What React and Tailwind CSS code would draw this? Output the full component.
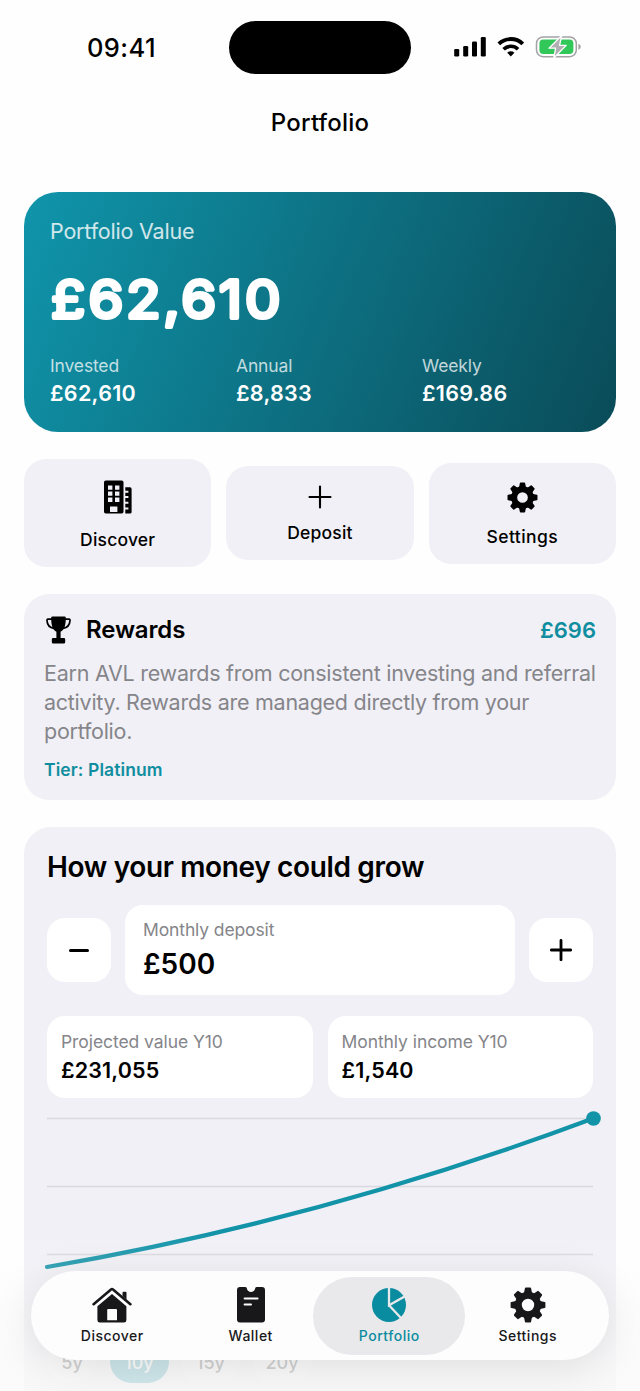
import { clsx } from "clsx";

const GearIcon = ({ className }) => (
  <svg viewBox="-18 -18 36 36" className={className}>
    <circle r="9.7" fill="none" stroke="currentColor" strokeWidth="7" />
    {[0, 45, 90, 135, 180, 225, 270, 315].map((angle) => (
      <path
        key={angle}
        d="M-3.1 -12 L-2.2 -16.5 H2.2 L3.1 -12 Z"
        fill="currentColor"
        stroke="currentColor"
        strokeWidth="1.8"
        strokeLinejoin="round"
        transform={`rotate(${angle})`}
      />
    ))}
  </svg>
);

const BuildingIcon = ({ className }) => (
  <svg viewBox="0 0 28 34" className={className} fill="currentColor">
    <path
      fillRule="evenodd"
      d="M1.8 .5H17.7Q19.5 .5 19.5 2.3V31.7Q19.5 33.5 17.7 33.5H1.8Q0 33.5 0 31.7V2.3Q0 .5 1.8 .5ZM4 5.6V9.8H8.4V5.6ZM11 5.6V9.8H15.4V5.6ZM4 11.5V15.7H8.4V11.5ZM11 11.5V15.7H15.4V11.5ZM4 17.4V22H8.4V17.4ZM11 17.4V22H15.4V17.4ZM6 26.4V32H13.4V26.4Z"
    />
    <path d="M21.3 7.3H26Q27.6 7.3 27.6 8.9V31.9Q27.6 33.5 26 33.5H21.3V29.6H24.4V27.6H21.3V23.8H24.4V21.8H21.3V18.1H24.4V16.1H21.3V12.8H24.4V10.8H21.3Z" />
  </svg>
);

const PlusIcon = ({ className, width = 2.4 }) => (
  <svg
    viewBox="0 0 24 24"
    className={className}
    stroke="currentColor"
    strokeWidth={width}
    strokeLinecap="round"
  >
    <path d="M12 1.5V22.5M1.5 12H22.5" />
  </svg>
);

const TrophyIcon = ({ className }) => (
  <svg viewBox="0 0 26 28" className={className} fill="currentColor">
    <path d="M6.5 .5H18.5Q19.8 .5 19.8 1.8C19.8 8 19 13.5 14.6 15.8V22H17.8Q19.2 22 19.2 23.4V26Q19.2 27.5 17.8 27.5H7.2Q5.8 27.5 5.8 26V23.4Q5.8 22 7.2 22H10.4V15.8C6 13.5 5.2 8 5.2 1.8Q5.2 .5 6.5 .5Z" />
    <path
      d="M6 3.1H1.9Q.9 3.1 1 4.6C1.2 8.2 3.5 11.6 8 12.4M19 3.1H23.1Q24.1 3.1 24 4.6C23.8 8.2 21.5 11.6 17 12.4"
      fill="none"
      stroke="currentColor"
      strokeWidth="1.7"
    />
  </svg>
);

const HouseIcon = ({ className }) => (
  <svg viewBox="0 0 40 36" className={className}>
    <path
      d="M1.6 17.2 19 2.4Q20 1.6 21 2.4L38.4 17.2"
      fill="none"
      stroke="currentColor"
      strokeWidth="2.6"
      strokeLinecap="round"
      strokeLinejoin="round"
    />
    <path
      fill="currentColor"
      d="M30.5 9V5.8Q30.5 4.8 31.5 4.8H33.5Q34.5 4.8 34.5 5.8V12.7Z"
    />
    <path
      fill="currentColor"
      fillRule="evenodd"
      d="M20 7 34.4 19.3V33Q34.4 35.5 32 35.5H7.8Q5.4 35.5 5.4 33V19.3ZM16.2 22Q15.2 22 15.2 23V33.2H25V23Q25 22 24 22Z"
    />
  </svg>
);

const WalletIcon = ({ className }) => (
  <svg viewBox="0 0 28 36" className={className}>
    <path
      fill="currentColor"
      d="M3 0H8.2Q9.5 0 9.8 1.3C10.6 6.3 17.4 6.3 18.2 1.3Q18.5 0 19.8 0H25Q28 0 28 3V32.5Q28 35.5 25 35.5H3Q0 35.5 0 32.5V3Q0 0 3 0Z"
    />
    <path
      d="M7.6 11.4H20.6M7.6 17.4H14"
      stroke="white"
      strokeWidth="2"
      strokeLinecap="round"
    />
  </svg>
);

const PieIcon = ({ className }) => (
  <svg viewBox="-17 -17 34 34" className={className}>
    <circle r="17" fill="currentColor" />
    <path
      d="M0 -18V.3L16 -8.7M0 .3 12.7 13.8"
      fill="none"
      stroke="#e9e9eb"
      strokeWidth="2.3"
    />
  </svg>
);

const StatusIcons = () => (
  <svg viewBox="0 0 128 24" className="h-6 w-32">
    <rect x="0.2" y="14" width="5" height="7.6" rx="1.3" />
    <rect x="9.2" y="11" width="5" height="10.6" rx="1.3" />
    <rect x="18" y="6.4" width="5" height="15.2" rx="1.3" />
    <rect x="26.8" y="2" width="5" height="19.6" rx="1.3" />
    <g transform="translate(56.8 21.4)" fill="none" stroke="#000">
      <path d="M-12 -12.5A17.3 17.3 0 0 1 12 -12.5" strokeWidth="3.9" />
      <path d="M-7.2 -7.2A10.3 10.3 0 0 1 7.2 -7.2" strokeWidth="3.7" />
      <path
        d="M0 0 -3.6 -3.7A5.2 5.2 0 0 1 3.6 -3.7Z"
        fill="#000"
        stroke="none"
      />
    </g>
    <rect
      x="82.5"
      y="1.9"
      width="39.8"
      height="19.8"
      rx="6.6"
      fill="none"
      stroke="#a3a3a5"
      strokeWidth="1.5"
    />
    <path d="M124.4 8.7Q126.8 9.8 126.8 11.8T124.4 15Z" fill="#a3a3a5" />
    <rect x="85.4" y="4.6" width="34" height="14.4" rx="4" fill="#31c759" />
    <path
      d="M107.6 0.6 95 13.2H101.6L99.8 23 112.2 10.4H105.6Z"
      fill="#b0b0b2"
      stroke="white"
      strokeWidth="1.3"
      strokeLinejoin="round"
    />
  </svg>
);

const stats = [
  { label: "Invested", value: "£62,610" },
  { label: "Annual", value: "£8,833" },
  { label: "Weekly", value: "£169.86" },
];

const projections = [
  { label: "Projected value Y10", value: "£231,055" },
  { label: "Monthly income Y10", value: "£1,540" },
];

const ranges = ["5y", "10y", "15y", "20y"];

const tabs = [
  { label: "Discover", icon: <HouseIcon className="h-9 w-10" /> },
  { label: "Wallet", icon: <WalletIcon className="h-9 w-7" /> },
  {
    label: "Portfolio",
    icon: <PieIcon className="h-[34px] w-[34px]" />,
    active: true,
  },
  { label: "Settings", icon: <GearIcon className="h-9 w-9" /> },
];

const Header = () => (
  <header className="h-[192px]">
    <div className="flex h-[94px] items-center">
      <div className="w-[229px] pl-[87px] pt-px text-[25.5px] font-medium leading-[30px] tracking-[0.4px]">
        09:41
      </div>
      <div className="h-[53px] w-[182px] rounded-full bg-black" />
      <div className="ml-[43px]">
        <StatusIcons />
      </div>
    </div>
    <h1 className="text-center text-[24px] font-medium leading-[58px] tracking-[0.2px]">
      Portfolio
    </h1>
  </header>
);

const ValueCard = () => (
  <section className="h-[240px] rounded-[34px] bg-[linear-gradient(112deg,#1095ab_0%,#0a4b58_100%)] px-[26px] pt-[25px] text-white">
    <p className="text-[21.5px] leading-7 tracking-[-0.2px] text-white/80">
      Portfolio Value
    </p>
    {/* round joins soften the corners of the numerals */}
    <svg
      viewBox="0 0 260 70"
      className="mt-[19px] block h-[70px] w-[260px] overflow-visible text-[52px] font-normal tracking-[2.8px]"
    >
      <text
        x="1"
        y="54"
        fill="white"
        stroke="white"
        strokeWidth="4.1"
        strokeLinejoin="round"
        transform="scale(1.08 1)"
      >
        £62,610
      </text>
    </svg>
    <div className="mt-[21px] grid grid-cols-3 gap-[18px]">
      {stats.map((stat) => (
        <div key={stat.label}>
          <p className="text-[17.5px] leading-[22px] tracking-[-0.15px] text-white/75">
            {stat.label}
          </p>
          <p className="mt-0.5 text-[21.5px] font-semibold leading-7 tracking-[0.3px]">
            {stat.value}
          </p>
        </div>
      ))}
    </div>
  </section>
);

const QuickActions = () => (
  <div className="mt-[27px] grid grid-cols-3 items-center gap-[15px] text-[17.5px] font-medium leading-[22px] tracking-[0.2px]">
    <button className="flex h-[108px] flex-col items-center rounded-[22px] bg-[#f1f0f6] pt-[21px]">
      <BuildingIcon className="h-[34px] w-7" />
      <span className="mt-[15px]">Discover</span>
    </button>
    <button className="flex h-[94px] flex-col items-center rounded-[22px] bg-[#f1f0f6] pt-[19px]">
      <PlusIcon className="h-6 w-6" width={2.1} />
      <span className="mt-[13px]">Deposit</span>
    </button>
    <button className="flex h-[101px] flex-col items-center rounded-[22px] bg-[#f1f0f6] pt-[19px]">
      <GearIcon className="h-[31px] w-[31px]" />
      <span className="mt-[13px] tracking-[0.4px]">Settings</span>
    </button>
  </div>
);

const RewardsCard = () => (
  <section className="mt-[27px] h-[206px] rounded-[25px] bg-[#f1f0f6] px-5 pt-[21px]">
    <div className="flex h-[30px] items-center">
      <TrophyIcon className="ml-[2px] h-7 w-[26px]" />
      <h2 className="ml-3.5 text-[24px] font-semibold leading-[30px] tracking-[-0.15px]">
        Rewards
      </h2>
      <span className="ml-auto text-[22px] font-semibold leading-[30px] text-[#108ea0]">
        £696
      </span>
    </div>
    <p className="mt-3.5 whitespace-nowrap text-[21.5px] leading-[29px] tracking-[-0.26px] text-[#85858a]">
      Earn AVL rewards from consistent investing and referral
      <br />
      activity. Rewards are managed directly from your
      <br />
      portfolio.
    </p>
    <p className="mt-[13px] text-[17.5px] font-semibold leading-[22px] tracking-[0.1px] text-[#108ea0]">
      Tier: Platinum
    </p>
  </section>
);

const GrowthChart = () => (
  <svg viewBox="0 0 546 242" className="h-[242px] w-full overflow-visible">
    <path d="M0 20.5H546M0 88.5H546M0 156.5H546" stroke="#d9d8de" strokeWidth="1.4" />
    <path
      d="M0 169Q273 122.4 546 20.5"
      fill="none"
      stroke="#1293a8"
      strokeWidth="4.2"
      strokeLinecap="round"
    />
    <circle cx="546.5" cy="20.5" r="7.3" fill="#1293a8" />
  </svg>
);

const GrowthCard = () => (
  <section className="mt-[27px] h-[620px] rounded-t-[27px] bg-[#f1f0f6] px-[23px] pt-[23px]">
    <h2 className="text-[28px] font-semibold leading-[34px] tracking-[-0.35px]">
      How your money could grow
    </h2>
    <div className="mt-[21px] flex items-center justify-between">
      <button className="flex h-16 w-16 items-center justify-center rounded-[18px] bg-white">
        <span className="h-[3px] w-5 rounded-full bg-black" />
      </button>
      <div className="h-[90px] w-[390px] rounded-[18px] bg-white px-[18px] pt-3.5">
        <p className="text-[17.5px] leading-[22px] tracking-[-0.12px] text-[#85858a]">
          Monthly deposit
        </p>
        <p className="mt-1.5 text-[28px] font-semibold leading-[34px]">£500</p>
      </div>
      <button className="flex h-16 w-16 items-center justify-center rounded-[18px] bg-white">
        <PlusIcon className="h-[22px] w-[22px]" width={3.1} />
      </button>
    </div>
    <div className="mt-[21px] grid grid-cols-2 gap-[15px]">
      {projections.map((item) => (
        <div
          key={item.label}
          className="h-[82px] rounded-[18px] bg-white px-3.5 pt-[15px]"
        >
          <p className="text-[17.5px] leading-[22px] tracking-[-0.07px] text-[#85858a]">
            {item.label}
          </p>
          <p className="mt-[3px] text-[21.5px] font-semibold leading-7 tracking-[0.15px]">
            {item.value}
          </p>
        </div>
      ))}
    </div>
    <GrowthChart />
    <div className="flex gap-[12.5px]">
      {ranges.map((range) => (
        <span
          key={range}
          className={clsx(
            "h-[43px] rounded-full text-center text-[18px] font-medium leading-[46px]",
            range === "5y" ? "w-[50px]" : "w-[59px]",
            range === "10y" ? "bg-[#1293a8] text-white" : "bg-[#f8f8fb] text-[#222]"
          )}
        >
          {range}
        </span>
      ))}
    </div>
  </section>
);

const TabBar = () => (
  <nav className="absolute bottom-[31px] left-[31px] flex h-[89px] w-[578px] items-center justify-center rounded-full bg-[#fdfdfe] shadow-[0_8px_40px_rgba(0,0,0,0.1)]">
    {tabs.map((tab) => (
      <button
        key={tab.label}
        className={clsx(
          "-mx-[6.75px] flex h-[78px] w-[152px] flex-col items-center rounded-full pt-2.5",
          tab.active ? "bg-[#e9e9eb] text-[#0a8ca0]" : "text-[#18181a]"
        )}
      >
        <span className="flex h-9 items-center">{tab.icon}</span>
        <span className="mt-1 text-[14px] font-medium leading-[18px] tracking-[0.5px]">
          {tab.label}
        </span>
      </button>
    ))}
  </nav>
);

const App = () => {
  return (
    <div className="relative h-[1391px] w-[640px] overflow-hidden bg-[#fefefe] font-['Inter',sans-serif] text-black">
      <Header />
      <main className="px-6">
        <ValueCard />
        <QuickActions />
        <RewardsCard />
        <GrowthCard />
      </main>
      <div className="absolute inset-x-0 bottom-0 h-[160px] bg-[linear-gradient(to_bottom,rgba(250,250,250,0)_0%,rgba(250,250,250,0.25)_35%,rgba(250,250,250,0.8)_80%,rgba(250,250,250,0.82)_100%)]" />
      <TabBar />
    </div>
  );
};

export default App;
